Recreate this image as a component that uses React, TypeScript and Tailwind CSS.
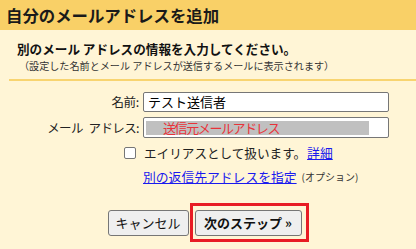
import React from "react";

export default function App() {
  return (
    <div
      className="w-[416px] h-[249px] overflow-hidden bg-[#fff5d6] text-[#222] flex flex-col"
      style={{ fontFamily: '"Noto Sans CJK JP", "Noto Sans", sans-serif' }}
    >
      <div className="h-[30px] shrink-0 bg-[#f9d067] flex items-center pl-[6px] text-[16.4px] font-bold leading-none text-[#1a1a1a]">
        自分のメールアドレスを追加
      </div>

      <div className="mt-[11px] pl-[17px] text-[12.6px] font-bold leading-[16px] text-[#111]">
        別のメール アドレスの情報を入力してください。
      </div>
      <div className="mt-[2px] pl-[19px] text-[10.1px] leading-[13px] text-[#333]">
        （設定した名前とメール アドレスが送信するメールに表示されます）
      </div>

      <div className="mt-[7px] ml-[9px] h-[2px] bg-[#f8d470] shrink-0" />

      <div className="mt-[11px] grid grid-cols-[139px_246px] gap-x-[4px] gap-y-[5px] items-center">
        <div className="text-right text-[12.5px] leading-[16px] tracking-[-0.3px]">名前:</div>
        <div className="h-[20px] bg-white border border-[#767676] rounded-[2px] flex items-center pl-[4px] text-[13px] text-black">
          テスト送信者
        </div>
        <div className="text-right text-[12.5px] leading-[16px] tracking-[-0.6px] whitespace-pre">
          {"メール\u2002アドレス:"}
        </div>
        <div className="h-[21px] bg-white border border-[#767676] rounded-[2px] flex items-center pl-[2px]">
          <div className="h-[14px] w-[223px] bg-[#c0c0c0] flex items-center pl-[17px] text-[13px] tracking-[-1.4px] text-[#e8333a] leading-none">
            送信元メールアドレス
          </div>
        </div>
      </div>

      <div className="mt-[7px] ml-[124px] flex items-center h-[16px]">
        <div className="w-[12px] h-[12px] bg-white border border-[#767676] rounded-[2px] shrink-0" />
        <span className="ml-[8px] text-[12.6px] leading-[16px] text-[#222]">エイリアスとして扱います。</span>
        <a className="ml-[1px] text-[12.8px] leading-[16px] text-[#1a1aee] underline">詳細</a>
      </div>

      <div className="mt-[8px] ml-[143px] flex items-center h-[16px]">
        <a className="text-[12.8px] leading-[16px] text-[#1a1aee] underline">別の返信先アドレスを指定</a>
        <span className="ml-[5px] text-[10px] leading-[16px] text-[#333]">(オプション)</span>
      </div>

      <div className="mt-[18px] flex justify-center items-start">
        <div className="mt-[7px] h-[26px] w-[81px] bg-[#efefef] border border-[#767676] rounded-[3px] flex items-center justify-center text-[13px] text-[#111]">
          キャンセル
        </div>
        <div className="ml-[1px] border-[3px] border-[#e81c24] pl-[2px] pr-[4px] pt-[4px] pb-[3px]">
          <div className="h-[26px] w-[107px] bg-[#efefef] border border-[#767676] rounded-[3px] flex items-center justify-center text-[13px] font-bold text-[#111]">
            次のステップ »
          </div>
        </div>
      </div>
    </div>
  );
}
